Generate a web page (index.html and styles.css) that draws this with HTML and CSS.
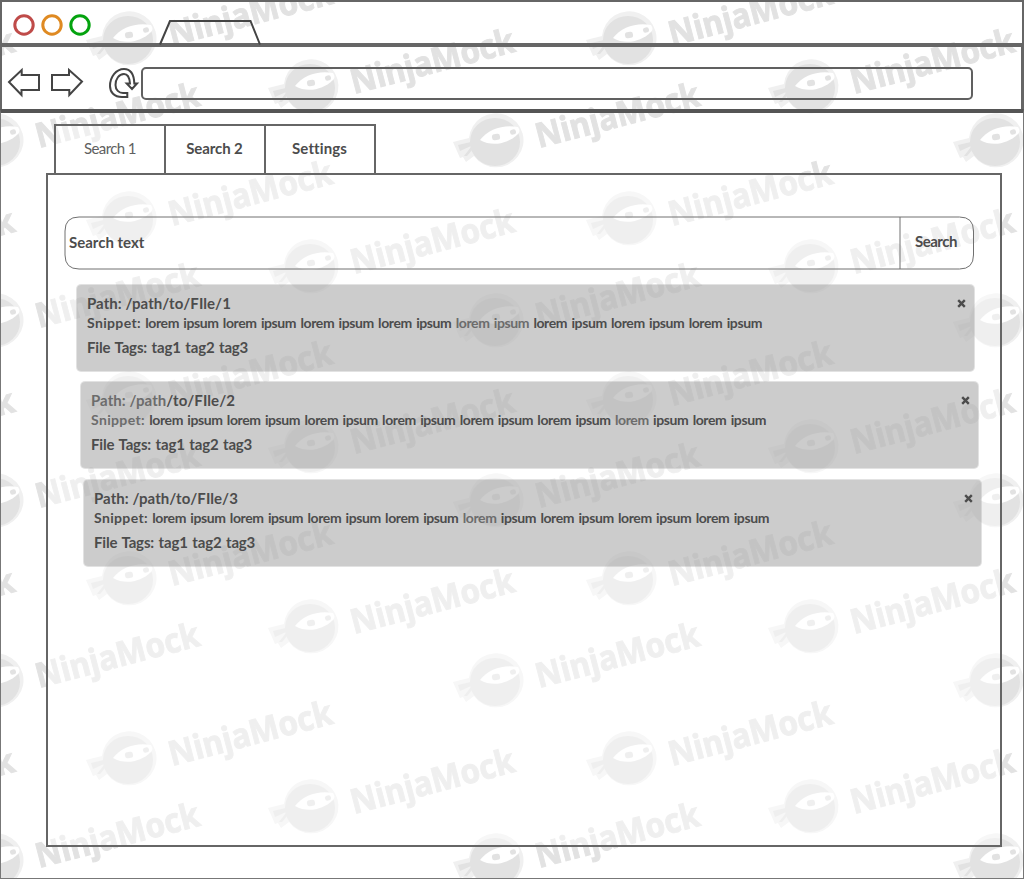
FILE: index.html
```html
<!DOCTYPE html>
<html lang="en">
<head>
<meta charset="utf-8">
<title>Search</title>
<link rel="stylesheet" href="styles.css">
</head>
<body>
<svg class="watermark" width="1024" height="879" aria-hidden="true">
  <defs>
    <g id="mark">
      <path class="halo" d="M-41 0 L-25 -4 A27.300 27 0 1 1 -20 14 L-28 20 L-31 15 L-34 16 Z"/>
      <ellipse class="ink" cx="1" cy="0" rx="25" ry="24"/>
      <path class="ink" d="M-36 3 L-23 0 L-23 4 L-34 9 Z M-23 5 L-30 14 L-27 14 L-22 8 Z"/>
      <path class="paper" d="M-14 -2 C-6 -13 10 -18 24 -15 Q27 -11 24 -8 C14 2 -2 5 -14 -2 Z"/>
      <rect class="ink" x="-2" y="-8" width="8" height="6" rx="2.5" transform="rotate(-8 2 -5)"/>
      <rect class="ink" x="16" y="-12.500" width="6" height="5" rx="2.5" transform="rotate(-15 19 -10)"/>
      <text class="ink brand" x="0" y="0" textLength="168" lengthAdjust="spacingAndGlyphs" transform="translate(45 6) rotate(-14.700)">NinjaMock</text>
    </g>
    <pattern id="marks" x="85" y="0" width="500" height="180" patternUnits="userSpaceOnUse">
      <use href="#mark" x="42" y="40"/><use href="#mark" x="42" y="220"/>
      <use href="#mark" x="224" y="88"/>
      <use href="#mark" x="409" y="142"/><use href="#mark" x="-91" y="142"/>
      <use href="#mark" x="409" y="-38"/><use href="#mark" x="-91" y="-38"/>
    </pattern>
  </defs>
  <rect width="1024" height="879" fill="url(#marks)"/>
</svg>
<div class="window">
  <header class="titlebar">
    <svg width="270" height="45" viewBox="2 2 270 45">
      <g fill="none" stroke-width="3">
        <circle cx="24" cy="25" r="9.2" stroke="#bf4b49"/>
        <circle cx="52" cy="25" r="9.2" stroke="#df8a22"/>
        <circle cx="80" cy="25" r="9.2" stroke="#04a30f"/>
        <path d="M160 44.500 L170 21 H250.500 L260 44.500" stroke="#444" stroke-width="2"/>
      </g>
    </svg>
  </header>
  <div class="toolbar">
    <svg width="139" height="62" viewBox="2 47 139 62">
      <g fill="none" stroke="#444" stroke-width="2">
        <path d="M9 82 L21.700 70 V75 H39 V90 H21.500 V95 Z"/>
        <path d="M52 75 H69 V70 L82 81.500 L69.300 95 V90 H52 Z"/>
        <path d="M127.300 97 H122 C114 97 110 92 110 86 C110 77 116 69 124 69 C131 69 134 75 134.300 83.500 H137 L132 89 L126.700 83.500 H130 C129.500 77 128 74 124 74 C119 74 115.500 79 115.500 85 C115.500 90 119 93 123 93 H127.300 Z"/>
      </g>
    </svg>
    <div class="address"></div>
  </div>
  <main class="page">
    <nav class="tabs">
      <div class="tab first">Search 1</div>
      <div class="tab second">Search 2</div>
      <div class="tab third">Settings</div>
    </nav>
    <section class="panel">
      <div class="search">
        <div class="field">Search text</div>
        <div class="button">Search</div>
        <svg class="outline" width="912" height="56" viewBox="64 216 912 56"><path d="M79 217 H959.500 Q973.500 217 973.500 231 V255 Q973.500 269 959.500 269 H79 Q65 269 65 255 V231 Q65 217 79 217 Z M900 217 V269"/></svg>
      </div>
      <article class="card one">
        <div class="lines">
          <p class="path">Path: /path/to/FIle/1</p>
          <p class="snippet"><span class="label">Snippet:</span> lorem ipsum lorem ipsum lorem ipsum lorem ipsum <span class="faint">lorem ipsum</span> lorem ipsum lorem ipsum lorem ipsum</p>
          <p class="tags">File Tags: tag1 tag2 tag3</p>
        </div>
        <svg class="close" width="9" height="9"><path d="M1.200 1.200 L7.800 7.800 M7.800 1.200 L1.200 7.800"/></svg>
      </article>
      <article class="card two">
        <div class="lines">
          <p class="path"><span class="faint">Path: /path</span>/to/FIle/2</p>
          <p class="snippet"><span class="label faint">Snippet:</span> lorem ipsum lorem ipsum lorem ipsum lorem ipsum lorem ipsum lorem ipsum <span class="faint">lorem</span> ipsum lorem ipsum</p>
          <p class="tags">File Tags: tag1 tag2 tag3</p>
        </div>
        <svg class="close" width="9" height="9"><path d="M1.200 1.200 L7.800 7.800 M7.800 1.200 L1.200 7.800"/></svg>
      </article>
      <article class="card three">
        <div class="lines">
          <p class="path">Path: /path/to/FIle/3</p>
          <p class="snippet"><span class="label">Snippet:</span> lorem ipsum lorem ipsum lorem ipsum lorem ipsum <span class="faint">lorem</span> ipsum lorem ipsum lorem ipsum lorem ipsum</p>
          <p class="tags">File Tags: tag1 tag2 tag3</p>
        </div>
        <svg class="close" width="9" height="9"><path d="M1.200 1.200 L7.800 7.800 M7.800 1.200 L1.200 7.800"/></svg>
      </article>
    </section>
  </main>
</div>
</body>
</html>
```
FILE: styles.css
```css
* { box-sizing: border-box; }
body { margin: 0; background: #fff; color: #4c4c4c; font-family: Lato, "Liberation Sans", sans-serif; font-size: 15px; font-weight: 700; overflow: hidden; }
svg { display: block; flex: none; }
p { margin: 0; }
.watermark { position: absolute; left: 0; top: 0; z-index: -1; }
.halo { fill: #f0f0f0; }
.ink { fill: #e2e2e2; }
.paper { fill: #fff; }
.brand { font-family: "Noto Sans", sans-serif; font-weight: 700; font-size: 34px; stroke: #e2e2e2; stroke-width: 1px; }
.window { width: 1024px; height: 879px; display: flex; flex-direction: column; }
.titlebar { height: 47px; border: 2px solid #666; border-bottom-width: 4px; }
.toolbar { height: 62px; display: flex; border: solid #666; border-width: 0 3px 0 2px; }
.address { width: 832px; height: 33px; margin-top: 20px; border: 2px solid #606060; border-radius: 5px; }
.page { flex: 1; border: 1px solid #777; border-top: 4px solid #555; padding: 11px 0 0 45px; }
.tabs { display: flex; width: 322px; height: 49px; margin-left: 8px; border: 2px solid #666; border-bottom: 0; background: rgba(255,255,255,.45); line-height: 20px; }
.tab { padding-top: 12px; text-align: center; white-space: nowrap; }
.first { width: 108px; color: #606060; font-weight: 400; letter-spacing: -.6px; }
.second { width: 102px; border: solid #666; border-width: 0 2px; letter-spacing: -.1px; padding-right: 1px; }
.third { width: 108px; letter-spacing: .1px; padding-right: 1px; }
.panel { width: 956px; height: 674px; border: 2px solid #666; background: rgba(255,255,255,.45); padding: 41px 0 0 16px; }
.search { position: relative; width: 912px; height: 56px; display: flex; }
.outline { position: absolute; left: 0; top: 0; fill: none; stroke: #707070; stroke-width: 1; }
.field { width: 836px; padding: 16px 5px; line-height: 20px; letter-spacing: 0; }
.button { width: 72px; padding-top: 15px; line-height: 20px; text-align: center; letter-spacing: -.5px; }
.card { width: 899px; height: 88px; border: 1px solid rgba(140,140,140,.25); border-radius: 5px; background: rgba(142,142,142,.45); background-clip: padding-box; display: flex; justify-content: space-between; padding: 8px 8px 0 10px; }
.one { margin: 12px 0 0 12px; }
.two { margin: 9px 0 0 16px; }
.three { margin: 10px 0 0 19px; }
.lines { white-space: nowrap; line-height: 20px; }
.path { letter-spacing: .05px; }
.snippet { font-size: 14px; letter-spacing: -.4px; word-spacing: 1.3px; }
.label { letter-spacing: .35px; }
.tags { margin-top: 4px; letter-spacing: -.15px; word-spacing: 1px; }
.faint { color: #6c6c6c; }
.close { margin-top: 6px; fill: none; stroke: #4c4c4c; stroke-width: 2.4; }
```
